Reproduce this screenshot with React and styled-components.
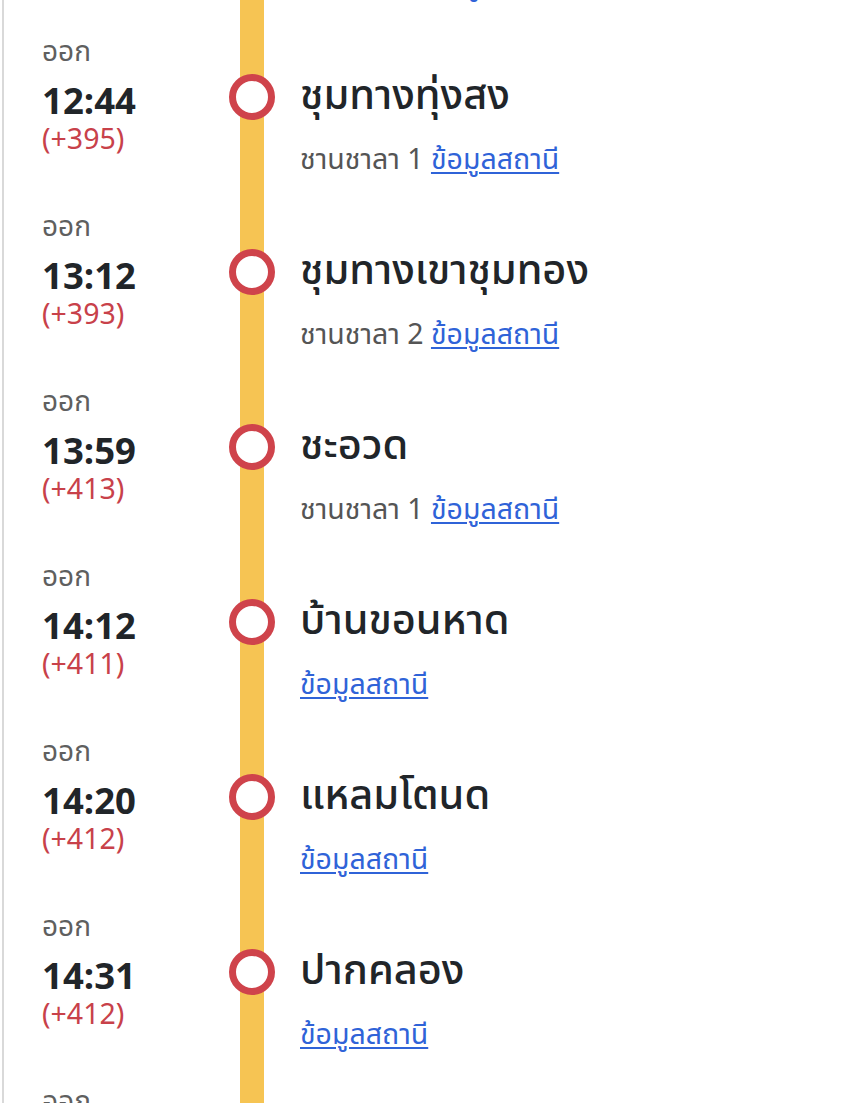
import React from "react";
import styled, { createGlobalStyle } from "styled-components";

const Global = createGlobalStyle`
  html, body { margin: 0; padding: 0; background: #fff; }
  body { font-family: "Noto Sans Thai", "Noto Sans", sans-serif; color: #222; overflow: hidden; }
`;

const Page = styled.div`
  margin-left: 2px;
  border-left: 2px solid #d9d9d9;
  min-height: 1103px;
  overflow: hidden;
`;

const List = styled.ol`
  list-style: none;
  margin: -140px 0 0 0;
  padding: 0;
`;

const Row = styled.li`
  display: grid;
  grid-template-columns: 225px 46px 1fr;
  height: 175px;
`;

const TimeCol = styled.div`
  padding-left: 38px;
  display: flex;
  flex-direction: column;
`;

const Label = styled.div`
  font-size: 28px;
  line-height: 36px;
  color: #5f5f5f;
`;

const Time = styled.div`
  margin-top: 10px;
  font-size: 36.5px;
  line-height: 44px;
  font-weight: 700;
  color: #212529;
`;

const Delay = styled.div`
  margin-top: 1px;
  font-size: 28.5px;
  line-height: 30px;
  color: #c8414a;
`;

const Track = styled.div`
  background: linear-gradient(
    to right,
    transparent 11px,
    #f6c453 11px,
    #f6c453 35px,
    transparent 35px
  );
  display: flex;
  justify-content: center;
`;

const Stop = styled.div`
  box-sizing: border-box;
  margin-top: 39px;
  width: 46px;
  height: 46px;
  border-radius: 50%;
  border: 7px solid #cf434b;
  background: #fff;
`;

const Info = styled.div`
  padding-left: 25px;
  display: flex;
  flex-direction: column;
`;

const Name = styled.div`
  margin-top: 36px;
  font-size: 41.5px;
  line-height: 52px;
  font-weight: 500;
  color: #212529;
`;

const Sub = styled.div`
  margin-top: 20px;
  font-size: 28.5px;
  line-height: 36px;
  color: #555;
`;

const StationLink = styled.a`
  color: #2f63d8;
  text-decoration: underline;
  text-underline-offset: 3px;
  text-decoration-thickness: 2px;
`;

const stops = [
  { t: "12:30", d: "+390", name: "คลองจันดี", pf: "1" },
  { t: "12:44", d: "+395", name: "ชุมทางทุ่งสง", pf: "1" },
  { t: "13:12", d: "+393", name: "ชุมทางเขาชุมทอง", pf: "2" },
  { t: "13:59", d: "+413", name: "ชะอวด", pf: "1" },
  { t: "14:12", d: "+411", name: "บ้านขอนหาด" },
  { t: "14:20", d: "+412", name: "แหลมโตนด" },
  { t: "14:31", d: "+412", name: "ปากคลอง" },
  { t: "14:45", d: "+410", name: "พัทลุง", pf: "1" },
];

export default function App() {
  return (
    <>
      <Global />
      <Page>
        <List>
          {stops.map((s) => (
            <Row key={s.t}>
              <TimeCol>
                <Label>ออก</Label>
                <Time>{s.t}</Time>
                <Delay>({s.d})</Delay>
              </TimeCol>
              <Track>
                <Stop />
              </Track>
              <Info>
                <Name>{s.name}</Name>
                <Sub>
                  {s.pf ? <>ชานชาลา {s.pf} </> : null}
                  <StationLink href="#">ข้อมูลสถานี</StationLink>
                </Sub>
              </Info>
            </Row>
          ))}
        </List>
      </Page>
    </>
  );
}
